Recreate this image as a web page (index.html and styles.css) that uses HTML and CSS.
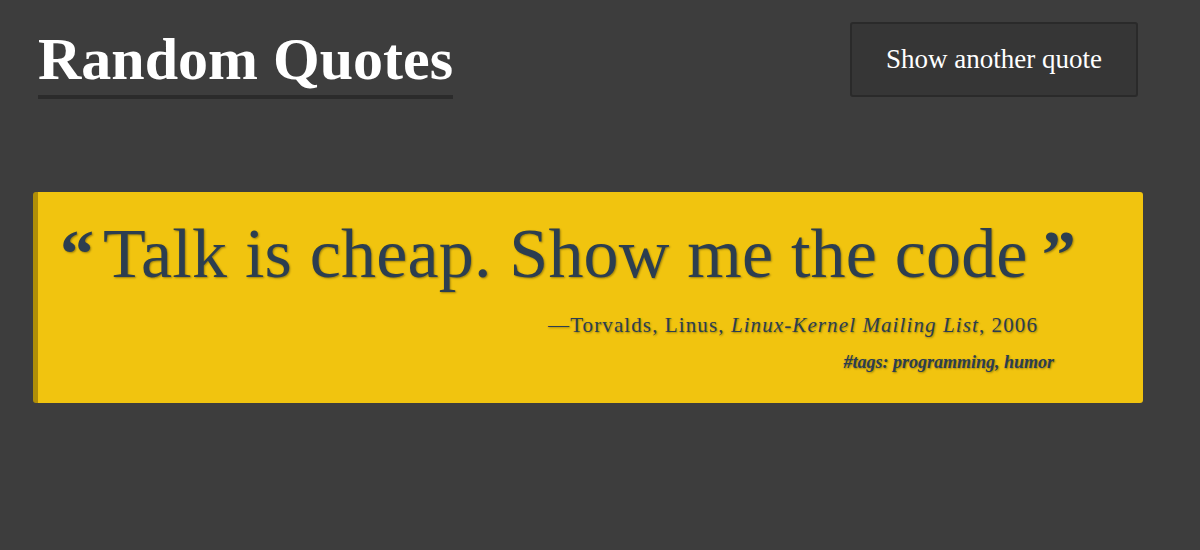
FILE: index.html
```html
<!DOCTYPE html>
<html>
<head>
<meta charset="utf-8">
<link rel="stylesheet" href="styles.css">
</head>
<body>
<div class="page">
  <header class="header">
    <h1 class="title">Random Quotes</h1>
    <button class="btn">Show another quote</button>
  </header>
  <section class="card">
    <blockquote class="quote">
      <span class="mark">“</span><span class="text">Talk is cheap. Show me the code</span><span class="mark mark-close">”</span>
    </blockquote>
    <p class="cite">—Torvalds, Linus, <em>Linux-Kernel Mailing List</em>, 2006</p>
    <p class="tags">#tags: programming, humor</p>
  </section>
</div>
</body>
</html>
```
FILE: styles.css
```css
html, body {
  margin: 0;
  padding: 0;
  background: #3d3d3d;
  font-family: "Liberation Serif", serif;
}
.page {
  padding: 22px 57px 0 33px;
}
.header {
  display: flex;
  justify-content: space-between;
  align-items: flex-start;
  padding-left: 5px;
  padding-right: 5px;
}
.title {
  margin: 7px 0 0 0;
  padding-bottom: 6px;
  font-size: 60px;
  font-weight: bold;
  color: #ffffff;
  line-height: 60px;
  border-bottom: 4px solid #2b2b2b;
}
.btn {
  width: 288px;
  height: 75px;
  padding: 0;
  background: #363636;
  border: 2px solid #2a2a2a;
  border-radius: 3px;
  color: #ffffff;
  font-family: "Liberation Serif", serif;
  font-size: 27px;
}
.card {
  margin-top: 93px;
  background: #f1c40f;
  border-left: 5px solid #b08e08;
  border-radius: 3px;
  height: 211px;
  box-sizing: border-box;
  padding: 22px 0 0 22px;
  color: #2c3e50;
}
.quote {
  margin: 0;
  font-size: 70px;
  line-height: 80px;
  text-shadow: 1px 1px 2px rgba(0,0,0,0.35);
  white-space: nowrap;
}
.text {
  letter-spacing: 0.2px;
}
.mark {
  font-size: 68px;
  font-weight: bold;
  line-height: 1;
  margin-right: 9px;
}
.mark-close {
  margin-left: 14px;
  margin-right: 0;
}
.cite {
  margin: 19px 0 0 0;
  line-height: 24px;
  text-align: right;
  padding-right: 105px;
  font-size: 21px;
  letter-spacing: 1.1px;
  text-shadow: 1px 1px 2px rgba(0,0,0,0.35);
}
.tags {
  margin: 15px 0 0 0;
  line-height: 20px;
  text-align: right;
  padding-right: 89px;
  font-size: 18px;
  font-style: italic;
  font-weight: bold;
  text-shadow: 1px 1px 2px rgba(0,0,0,0.35);
}
```
